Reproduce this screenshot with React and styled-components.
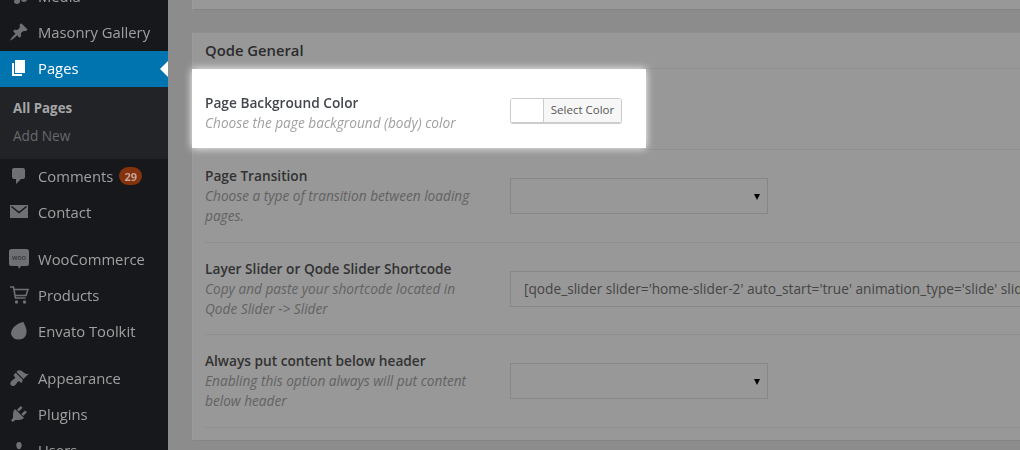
import React from 'react';
import styled, { createGlobalStyle } from 'styled-components';

const GlobalStyle = createGlobalStyle`
	html, body {
		margin: 0;
		height: 100%;
		overflow: hidden;
		background: #8c8c8c;
	}
	* {
		box-sizing: border-box;
	}
`;

const Page = styled.div`
	display: flex;
	width: 1020px;
	height: 450px;
	overflow: hidden;
	font-family: "Open Sans", "Noto Sans", sans-serif;
	filter: blur(0.45px);
`;

const Sidebar = styled.nav`
	flex: 0 0 168px;
	height: 450px;
	background: #16181c;
	overflow: hidden;
`;
const MenuList = styled.div`
	margin-top: -21px;
`;
const MenuItem = styled.div`
	position: relative;
	display: flex;
	align-items: center;
	height: 36px;
	margin-top: ${(p) => (p.$gap ? '11px' : '0')};
	padding: 0 0 2px 9px;
	font-size: 14.8px;
	color: ${(p) => (p.$active ? '#ffffff' : '#a0a0a0')};
	background: ${(p) => (p.$active ? '#0074ae' : 'transparent')};

	${(p) => p.$active && `
		&::after {
			content: '';
			position: absolute;
			right: 0;
			top: 10px;
			border: 8px solid transparent;
			border-left-width: 0;
			border-right-color: #ffffff;
		}
	`}
`;
const IconBox = styled.span`
	flex: 0 0 20px;
	display: flex;
	width: 20px;
	height: 20px;
	margin-right: 9px;
	color: ${(p) => (p.$active ? '#ffffff' : '#6e7073')};

	svg {
		width: 20px;
		height: 20px;
		fill: currentColor;
	}
`;
const Badge = styled.span`
	display: inline-flex;
	align-items: center;
	justify-content: center;
	width: 23px;
	height: 18px;
	margin-left: 6px;
	border-radius: 9px;
	background: #85320f;
	color: #c7a497;
	font-size: 11px;
	font-weight: 700;
`;
const SubMenu = styled.div`
	height: 72px;
	padding: 7px 0 0 13px;
	background: #212327;
`;
const SubItem = styled.div`
	height: 28px;
	font-size: ${(p) => (p.$current ? '13.3px' : '13.6px')};
	line-height: 28px;
	font-weight: ${(p) => (p.$current ? 700 : 400)};
	color: ${(p) => (p.$current ? '#a6a6a6' : '#696a6c')};
`;

const Main = styled.main`
	flex: 1;
	min-width: 0;
	padding-left: 24px;
`;
const TopPanel = styled.div`
	height: 10px;
	margin-bottom: 22px;
	background: #989898;
	border-left: 1px solid #9c9c9c;
	border-bottom: 1px solid #858585;
`;
const Panel = styled.section`
	height: 409px;
	background: #989898;
	border-left: 1px solid #9c9c9c;
	border-bottom: 1px solid #858585;
	border-top: 1px solid #8f8f8f;
`;
const PanelHeader = styled.h2`
	margin: 0;
	height: 36px;
	padding-left: 12px;
	font-size: 14.8px;
	font-weight: 600;
	line-height: 35px;
	color: #2b2b2b;
	border-bottom: 1px solid #8e8e8e;
`;
const Row = styled.div`
	display: grid;
	grid-template-columns: 305px 1fr;
	align-items: center;
	height: ${(p) => p.$height}px;
	margin-left: 12px;
	border-bottom: 1px solid #8e8e8e;
`;
const Spotlight = styled.div`
	position: relative;
	z-index: 1;
	display: grid;
	grid-template-columns: 305px 1fr;
	align-items: start;
	width: 454px;
	height: 79px;
	margin: -1px 0 0 -13px;
	padding: 24px 0 0 13px;
	background: #ffffff;
	box-shadow: 0 0 8px 0 #ffffff;
`;
const LabelBlock = styled.div`
	width: 282px;
`;
const Title = styled.div`
	font-size: 13.7px;
	font-weight: 600;
	line-height: 20px;
	color: ${(p) => (p.$lit ? '#43474d' : '#323232')};
`;
const Description = styled.div`
	font-size: 13.66px;
	font-style: italic;
	line-height: 20px;
	color: ${(p) => (p.$lit ? '#a0a0a0' : '#626262')};
`;
const ColorPicker = styled.div`
	display: flex;
	width: 112px;
	height: 25px;
	margin-top: 5px;
	border: 1px solid #cccccc;
	border-radius: 3px;
	overflow: hidden;
	box-shadow: 0 1px 0 #cccccc;
`;
const Swatch = styled.div`
	width: 33px;
	background: #ffffff;
	border-right: 1px solid #cccccc;
`;
const SelectColor = styled.div`
	flex: 1;
	background: #f7f7f7;
	color: #555555;
	font-size: 11.5px;
	line-height: 22px;
	text-align: center;
`;
const SelectBox = styled.div`
	position: relative;
	width: 258px;
	height: 36px;
	border: 1px solid #878787;

	&::after {
		content: '';
		position: absolute;
		right: 7px;
		top: 15px;
		border: 3px solid transparent;
		border-top: 6px solid #000000;
		border-bottom-width: 0;
	}
`;
const TextField = styled.div`
	height: 36px;
	width: 600px;
	padding-left: 13px;
	border: 1px solid #878787;
	font-size: 13.7px;
	line-height: 34px;
	color: #454545;
	white-space: nowrap;
	overflow: hidden;
`;

const MediaIcon = () => (
	<svg viewBox="0 0 20 20"><path d="M12 2l6-1v12.5c0 1.4-1.3 2.5-3 2.5s-3-1.100-3-2.500 1.300-2.500 3-2.500V5l-4 1v9.500c0 1.400-1.300 2.500-3 2.500s-3-1.100-3-2.500S6.300 13 8 13V3z" /></svg>
);
const PinIcon = () => (
	<svg viewBox="0 0 20 20"><path d="M10.440 3.020l1.820-1.820 6.360 6.350-1.830 1.820c-1.050-.68-2.480-.57-3.410.36l-.75.75c-.92.93-1.040 2.350-.35 3.410l-1.830 1.820-2.410-2.410-2.800 2.790c-.42.42-3.380 2.710-3.800 2.290s1.860-3.390 2.280-3.810l2.790-2.790L4.100 9.360l1.830-1.820c1.050.69 2.480.57 3.400-.36l.75-.75c.93-.92 1.050-2.350.36-3.410z" /></svg>
);
const PagesIcon = () => (
	<svg viewBox="0 0 20 20"><path d="M6 15V2h10v13H6zm-1 1h8v2H3V5h2v11z" /></svg>
);
const CommentIcon = () => (
	<svg viewBox="0 0 20 20"><path d="M5 2h9c1.100 0 2 .9 2 2v7c0 1.100-.9 2-2 2h-2l-5 5v-5H5c-1.100 0-2-.9-2-2V4c0-1.100.9-2 2-2z" /></svg>
);
const MailIcon = () => (
	<svg viewBox="0 0 20 20">
		<path d="M1 3h18v13H1z" />
		<path d="M2.500 4.500l7.500 6 7.500-6" fill="none" stroke="#16181c" strokeWidth="1.500" />
	</svg>
);
const WooIcon = () => (
	<svg viewBox="0 0 20 20">
		<path d="M2.500 0h15A2.500 2.500 0 0 1 20 2.500v12a2.500 2.500 0 0 1-2.500 2.500H12l-2 3-1-3H2.500A2.500 2.500 0 0 1 0 14.500v-12A2.500 2.500 0 0 1 2.500 0z" />
		<text x="10" y="11" textAnchor="middle" fontSize="7" fill="#26282c">woo</text>
	</svg>
);
const CartIcon = () => (
	<svg viewBox="0 0 20 20">
		<path d="M1 2h3.500l2 11h10M5 4.500h14l-2 6H6" fill="none" stroke="currentColor" strokeWidth="1.600" />
		<circle cx="7.500" cy="17" r="1.700" />
		<circle cx="15.500" cy="17" r="1.700" />
	</svg>
);
const EnvatoIcon = () => (
	<svg viewBox="0 0 20 20"><path d="M14.500 1c1.500 4 3.500 6 3 11a8 8 0 0 1-15.500 1C2 7 8 2 14.500 1z" /></svg>
);
const BrushIcon = () => (
	<svg viewBox="0 0 20 20"><path d="M14.480 11.060L7.410 3.990l1.500-1.500c.5-.56 2.300-.47 3.510.32 1.210.8 1.430 1.280 2.910 2.100 1.180.64 2.450 1.260 4.450.85zm-.71.71L6.700 4.700 4.930 6.470c-.39.39-.39 1.020 0 1.410l1.060 1.060c.39.39.39 1.030 0 1.420-.6.6-3.480 2.230-4.200 3.500-.7 1.200-.7 2.700.2 3.500.9.900 2.300 1 3.500.3 1.300-.7 3-3.600 3.600-4.200.39-.39 1.020-.39 1.410 0l1.060 1.060c.39.39 1.030.39 1.420 0z" /></svg>
);
const PlugIcon = () => (
	<svg viewBox="0 0 20 20"><path d="M13.110 4.360L9.870 7.600 8 5.730l3.240-3.240c.35-.34 1.050-.2 1.560.32.52.51.66 1.210.31 1.550zm-8 1.770l.91-1.120 9.010 9.010-1.190.84c-.71.71-2.630 1.160-3.820 1.160H6.140L4.900 17.260c-.59.59-1.540.59-2.120 0-.59-.58-.59-1.530 0-2.120l1.240-1.240v-3.880c0-1.130.4-3.190 1.090-3.890zm7.260 3.970l3.240-3.240c.34-.35 1.040-.21 1.550.31.52.51.66 1.210.31 1.550l-3.240 3.250z" /></svg>
);
const UsersIcon = () => (
	<svg viewBox="0 0 20 20"><path d="M10 9.250c-2.270 0-2.730-3.440-2.730-3.440C7 4.020 7.820 2 9.970 2c2.160 0 2.980 2.020 2.710 3.810 0 0-.41 3.440-2.680 3.440zm0 2.570L12.720 10c2.390 0 4.520 2.330 4.520 4.530v2.490s-3.650 1.130-7.240 1.130c-3.650 0-7.240-1.130-7.240-1.130v-2.490c0-2.250 1.940-4.480 4.470-4.480z" /></svg>
);

const Item = ({ icon: Icon, label, active, gap, badge }) => (
	<MenuItem $active={active} $gap={gap}>
		<IconBox $active={active}><Icon /></IconBox>
		{label}
		{badge && <Badge>{badge}</Badge>}
	</MenuItem>
);

const Label = ({ title, text, lit }) => (
	<LabelBlock>
		<Title $lit={lit}>{title}</Title>
		<Description $lit={lit}>{text}</Description>
	</LabelBlock>
);

const App = () => (
	<Page>
		<GlobalStyle />
		<Sidebar>
			<MenuList>
				<Item icon={MediaIcon} label="Media" />
				<Item icon={PinIcon} label="Masonry Gallery" />
				<Item icon={PagesIcon} label="Pages" active />
				<SubMenu>
					<SubItem $current>All Pages</SubItem>
					<SubItem>Add New</SubItem>
				</SubMenu>
				<Item icon={CommentIcon} label="Comments" badge="29" />
				<Item icon={MailIcon} label="Contact" />
				<Item icon={WooIcon} label="WooCommerce" gap />
				<Item icon={CartIcon} label="Products" />
				<Item icon={EnvatoIcon} label="Envato Toolkit" />
				<Item icon={BrushIcon} label="Appearance" gap />
				<Item icon={PlugIcon} label="Plugins" />
				<Item icon={UsersIcon} label="Users" />
			</MenuList>
		</Sidebar>
		<Main>
			<TopPanel />
			<Panel>
				<PanelHeader>Qode General</PanelHeader>
				<Row $height={81}>
					<Spotlight>
						<Label lit title="Page Background Color" text="Choose the page background (body) color" />
						<ColorPicker>
							<Swatch />
							<SelectColor>Select Color</SelectColor>
						</ColorPicker>
					</Spotlight>
				</Row>
				<Row $height={93}>
					<Label title="Page Transition" text="Choose a type of transition between loading pages." />
					<SelectBox />
				</Row>
				<Row $height={92}>
					<Label title="Layer Slider or Qode Slider Shortcode" text="Copy and paste your shortcode located in Qode Slider -> Slider" />
					<TextField>[qode_slider slider='home-slider-2' auto_start='true' animation_type='slide' slider_height='auto']</TextField>
				</Row>
				<Row $height={93}>
					<Label title="Always put content below header" text="Enabling this option always will put content below header" />
					<SelectBox />
				</Row>
			</Panel>
		</Main>
	</Page>
);

export default App;
